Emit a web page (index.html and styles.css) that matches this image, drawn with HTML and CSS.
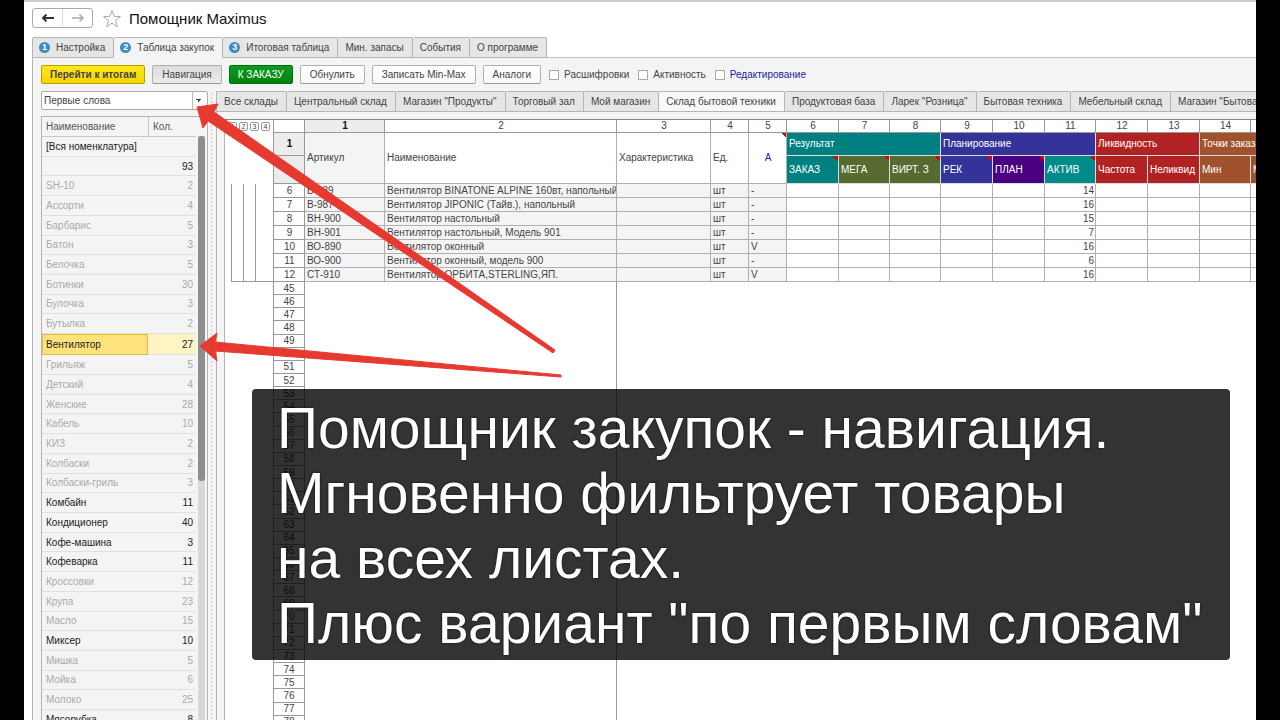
FILE: index.html
```html
<!DOCTYPE html>
<html lang="ru">
<head>
  <meta charset="UTF-8" />
  <title>Помощник Maximus</title>
  <link rel="stylesheet" href="styles.css">
</head>
<body>

  <div class="app">
    <header class="titlebar">
      <div class="history">
        <button aria-label="Назад"><svg width="12" height="8" viewBox="0 0 12 8"><path d="M4.500 .5L1 4l3.500 3.500M1 4h11" fill="none" stroke="#333" stroke-width="2"/></svg></button>
        <button aria-label="Вперед"><svg width="12" height="8" viewBox="0 0 12 8"><path d="M7.500 .5L11 4 7.500 7.500M11 4H0" fill="none" stroke="#aaa" stroke-width="1.500"/></svg></button>
      </div>
      <svg class="star" width="20" height="19" viewBox="0 0 20 19"><path d="M10 1.500l2.300 5.900 6.200.2-4.900 3.900 1.700 6.100L10 14.100l-5.300 3.500 1.700-6.100L1.500 7.600l6.200-.2z" fill="#fff" stroke="#aaa"/></svg>
      <h1>Помощник Maximus</h1>
    </header>

    <nav class="tabs">
      <button class="tab"><span class="num">1</span>Настройка</button>
      <button class="tab active"><span class="num">2</span>Таблица закупок</button>
      <button class="tab"><span class="num">3</span>Итоговая таблица</button>
      <button class="tab">Мин. запасы</button>
      <button class="tab">События</button>
      <button class="tab">О программе</button>
    </nav>

    <main class="panel">
      <div class="toolbar">
        <button class="btn yellow">Перейти к итогам</button>
        <button class="btn pressed">Навигация</button>
        <button class="btn green">К ЗАКАЗУ</button>
        <button class="btn">Обнулить</button>
        <button class="btn">Записать Min-Max</button>
        <button class="btn">Аналоги</button>
        <label class="check"><input type="checkbox">Расшифровки</label>
        <label class="check"><input type="checkbox">Активность</label>
        <label class="check blue"><input type="checkbox">Редактирование</label>
      </div>

      <div class="workspace">
        <aside class="sidebar">
          <select class="mode" aria-label="Вид навигации">
            <option>Первые слова</option>
          </select>
          <div class="nav-list">
            <table class="nav-table">
              <thead>
                <tr><th>Наименование</th><th class="qty">Кол.</th></tr>
              </thead>
              <tbody>
                <tr class="on"><td colspan="2">[Вся номенклатура]</td></tr>
                <tr class="on"><td></td><td>93</td></tr>
                <tr><td>SH-10</td><td>2</td></tr>
                <tr><td>Ассорти</td><td>4</td></tr>
                <tr><td>Барбарис</td><td>5</td></tr>
                <tr><td>Батон</td><td>3</td></tr>
                <tr><td>Белочка</td><td>5</td></tr>
                <tr><td>Ботинки</td><td>30</td></tr>
                <tr><td>Булочка</td><td>3</td></tr>
                <tr><td>Бутылка</td><td>2</td></tr>
                <tr class="on selected"><td>Вентилятор</td><td>27</td></tr>
                <tr><td>Грильяж</td><td>5</td></tr>
                <tr><td>Детский</td><td>4</td></tr>
                <tr><td>Женские</td><td>28</td></tr>
                <tr><td>Кабель</td><td>10</td></tr>
                <tr><td>КИЗ</td><td>2</td></tr>
                <tr><td>Колбаски</td><td>2</td></tr>
                <tr><td>Колбаски-гриль</td><td>3</td></tr>
                <tr class="on"><td>Комбайн</td><td>11</td></tr>
                <tr class="on"><td>Кондиционер</td><td>40</td></tr>
                <tr class="on"><td>Кофе-машина</td><td>3</td></tr>
                <tr class="on"><td>Кофеварка</td><td>11</td></tr>
                <tr><td>Кроссовки</td><td>12</td></tr>
                <tr><td>Крупа</td><td>23</td></tr>
                <tr><td>Масло</td><td>15</td></tr>
                <tr class="on"><td>Миксер</td><td>10</td></tr>
                <tr><td>Мишка</td><td>5</td></tr>
                <tr><td>Мойка</td><td>6</td></tr>
                <tr><td>Молоко</td><td>25</td></tr>
                <tr class="on"><td>Мясорубка</td><td>8</td></tr>
              </tbody>
            </table>
            <div class="scroll"><div class="thumb"></div></div>
          </div>
        </aside>

        <div class="splitter"></div>

        <section class="content">
          <nav class="sheets">
            <button class="sheet-tab">Все склады</button>
            <button class="sheet-tab">Центральный склад</button>
            <button class="sheet-tab">Магазин "Продукты"</button>
            <button class="sheet-tab">Торговый зал</button>
            <button class="sheet-tab">Мой магазин</button>
            <button class="sheet-tab active">Склад бытовой техники</button>
            <button class="sheet-tab">Продуктовая база</button>
            <button class="sheet-tab">Ларек "Розница"</button>
            <button class="sheet-tab">Бытовая техника</button>
            <button class="sheet-tab">Мебельный склад</button>
            <button class="sheet-tab">Магазин "Бытовая техника"</button>
          </nav>

          <div class="sheet">
            <div class="outline">
              <div class="levels"><button>1</button><button>2</button><button>3</button><button>4</button></div>
              <div class="brackets"><i></i><i></i><i></i></div>
            </div>
            <div class="grid-wrap">
              <table class="grid">
                <colgroup>
                  <col class="w-num"><col class="w-art"><col class="w-name"><col class="w-char"><col class="w-unit"><col class="w-unit">
                  <col class="w-a"><col class="w-b"><col class="w-b"><col class="w-a"><col class="w-a"><col class="w-b"><col class="w-a"><col class="w-a"><col class="w-b"><col class="w-b">
                </colgroup>
                <thead>
                  <tr class="numbers"><th></th><th class="current">1</th><th>2</th><th>3</th><th>4</th><th>5</th><th>6</th><th>7</th><th>8</th><th>9</th><th>10</th><th>11</th><th>12</th><th>13</th><th>14</th><th>15</th></tr>
                  <tr class="groups">
                    <th class="n current">1</th>
                    <th rowspan="2" class="shade">Артикул</th>
                    <th rowspan="2">Наименование</th>
                    <th rowspan="2">Характеристика</th>
                    <th rowspan="2">Ед.</th>
                    <th rowspan="2" class="flag mark">А</th>
                    <th colspan="3" class="teal">Результат</th>
                    <th colspan="3" class="blue">Планирование</th>
                    <th colspan="2" class="red">Ликвидность</th>
                    <th colspan="2" class="brown">Точки заказа</th>
                  </tr>
                  <tr class="heads">
                    <th class="n current"></th>
                    <th class="teal mark">ЗАКАЗ</th>
                    <th class="olive mark">МЕГА</th>
                    <th class="olive mark">ВИРТ. З</th>
                    <th class="blue mark">РЕК</th>
                    <th class="indigo mark">ПЛАН</th>
                    <th class="cyan mark">АКТИВ</th>
                    <th class="red">Частота</th>
                    <th class="red">Неликвид</th>
                    <th class="brown">Мин</th>
                    <th class="brown">Макс</th>
                  </tr>
                </thead>
                <tbody>
                  <tr><th class="n">6</th><td>В-989</td><td>Вентилятор BINATONE ALPINE 160вт, напольный</td><td></td><td>шт</td><td>-</td><td></td><td></td><td></td><td></td><td></td><td>14</td><td></td><td></td><td></td><td></td></tr>
                  <tr><th class="n">7</th><td>В-987</td><td>Вентилятор JIPONIC (Тайв.), напольный</td><td></td><td>шт</td><td>-</td><td></td><td></td><td></td><td></td><td></td><td>16</td><td></td><td></td><td></td><td></td></tr>
                  <tr><th class="n">8</th><td>ВН-900</td><td>Вентилятор настольный</td><td></td><td>шт</td><td>-</td><td></td><td></td><td></td><td></td><td></td><td>15</td><td></td><td></td><td></td><td></td></tr>
                  <tr><th class="n">9</th><td>ВН-901</td><td>Вентилятор настольный, Модель 901</td><td></td><td>шт</td><td>-</td><td></td><td></td><td></td><td></td><td></td><td>7</td><td></td><td></td><td></td><td></td></tr>
                  <tr><th class="n">10</th><td>ВО-890</td><td>Вентилятор оконный</td><td></td><td>шт</td><td>V</td><td></td><td></td><td></td><td></td><td></td><td>16</td><td></td><td></td><td></td><td></td></tr>
                  <tr><th class="n">11</th><td>ВО-900</td><td>Вентилятор оконный, модель 900</td><td></td><td>шт</td><td>-</td><td></td><td></td><td></td><td></td><td></td><td>6</td><td></td><td></td><td></td><td></td></tr>
                  <tr><th class="n">12</th><td>СТ-910</td><td>Вентилятор ОРБИТА,STERLING,ЯП.</td><td></td><td>шт</td><td>V</td><td></td><td></td><td></td><td></td><td></td><td>16</td><td></td><td></td><td></td><td></td></tr>
                </tbody>
              </table>
              <table class="tail"><tbody id="tail"></tbody></table>
            </div>
          </div>
        </section>
      </div>
    </main>
  </div>

  <svg class="arrows" width="1280" height="720" viewBox="0 0 1280 720">
    <path d="M197 107L218 104 214 112 555 350 553 353 208 121 203 128z" fill="#e63a30" stroke="#e63a30" stroke-linejoin="round"/>
    <path d="M200 346L217 333 215 342 561 375 561 377 215 351 217 361z" fill="#e63a30" stroke="#e63a30" stroke-linejoin="round"/>
  </svg>

  <div class="caption">
    Помощник закупок - навигация.<br>
    Мгновенно фильтрует товары<br>
    на всех листах.<br>
    Плюс вариант "по первым словам"
  </div>

  <script>
    // пустые строки листа
    const tail = document.getElementById('tail');
    for (let i = 45; i <= 78; i++) {
      tail.insertAdjacentHTML('beforeend', `<tr><th>${i}</th><td></td><td></td></tr>`);
    }
  </script>

</body>
</html>
```
FILE: styles.css
```css
* {
  box-sizing: border-box;
}

html, body {
  margin: 0;
  padding: 0;
  height: 100%;
  overflow: hidden;
}

body {
  background: #000;
  color: #444;
  font-family: "Liberation Sans", Arial, sans-serif;
  font-size: 10px;
  position: relative;
}

button, select, input {
  font: inherit;
  color: inherit;
  margin: 0;
}

table {
  border-collapse: separate;
  border-spacing: 0;
  table-layout: fixed;
}

th {
  font-weight: normal;
}

.app {
  height: 100vh;
  margin: 0 24px;
  background: #fff;
  border-top: 2px solid #ccc;
  overflow: hidden;
  display: flex;
  flex-direction: column;
}

/* заголовок */
.titlebar {
  display: flex;
  align-items: center;
  height: 35px;
  padding: 0 0 3px 8px;
}

.history {
  display: flex;
  width: 61px;
  height: 20px;
  border: 1px solid #aaa;
  border-radius: 3px;
}

.history button {
  flex: 1;
  display: flex;
  align-items: center;
  justify-content: center;
  padding: 0;
  border: none;
  background: none;
}

.history button + button {
  border-left: 1px solid #ddd;
}

.star {
  margin-left: 9px;
}

h1 {
  margin: 0 0 0 7px;
  font-size: 15px;
  font-weight: normal;
  color: #111;
}

/* вкладки */
.tabs {
  display: flex;
  height: 21px;
  padding-left: 8px;
  flex: none;
  position: relative;
  z-index: 1;
  margin-bottom: -1px;
}

.tab {
  display: flex;
  align-items: center;
  padding: 0 8px 0 7px;
  background: #e6e6e6;
  border: 1px solid #b5b5b5;
  border-left-width: 0;
  border-radius: 2px 2px 0 0;
  white-space: nowrap;
}

.tab:first-child {
  border-left-width: 1px;
}

.tab.active {
  background: #f4f4f4;
  border-bottom-color: #f4f4f4;
}

.num {
  width: 11px;
  height: 11px;
  margin-right: 6px;
  margin-left: -1px;
  border-radius: 50%;
  background: #3d8cc4;
  color: #fff;
  font-size: 9px;
  font-weight: bold;
  line-height: 11px;
  text-align: center;
}

.panel {
  flex: 1;
  min-height: 0;
  margin-left: 8px;
  padding-left: 8px;
  background: #f4f4f4;
  border-top: 1px solid #c4c4c4;
  border-left: 1px solid #b5b5b5;
  display: flex;
  flex-direction: column;
}

/* панель команд */
.toolbar {
  display: flex;
  align-items: center;
  height: 33px;
  gap: 7px;
  flex: none;
}

.btn {
  height: 19px;
  padding: 0 9px;
  background: linear-gradient(#fff, #f8f8f8);
  border: 1px solid #b0b0b0;
  border-bottom-color: #999;
  border-radius: 2px;
  line-height: 17px;
  white-space: nowrap;
}

.btn.yellow {
  padding: 0 8px;
  background: linear-gradient(#ffe81a, #f5d400);
  border-color: #b89e00;
  font-weight: bold;
}

.btn.pressed {
  background: linear-gradient(#dcdcdc, #ececec);
}

.btn.green {
  padding: 0 8px;
  background: linear-gradient(#0c9a1e, #00840f);
  border-color: #00700c;
  color: #fff;
}

.check {
  display: flex;
  align-items: center;
  gap: 5px;
  margin: 0 1px;
}

.check input {
  appearance: none;
  width: 10px;
  height: 10px;
  background: #fff;
  border: 1px solid #aaa;
}

.check.blue {
  color: #2222aa;
}

.workspace {
  display: flex;
  flex: 1;
  min-height: 0;
}

/* навигация */
.sidebar {
  width: 167px;
  flex: none;
  display: flex;
  flex-direction: column;
  gap: 6px;
}

.mode {
  appearance: none;
  height: 19px;
  padding: 0 2px;
  border: 1px solid #aaa;
  border-radius: 2px;
  background:
    linear-gradient(to top right, transparent 50%, #444 50%) right 8px center / 3px 3px no-repeat,
    linear-gradient(to top left, transparent 50%, #444 50%) right 5px center / 3px 3px no-repeat,
    linear-gradient(#bbb, #bbb) right 14px top / 1px 100% no-repeat,
    #fff;
}

.nav-list {
  flex: 1;
  min-height: 0;
  overflow: hidden;
  display: flex;
  justify-content: space-between;
  border: 1px solid #b5b5b5;
  border-bottom: none;
}

.nav-table {
  width: 154px;
  height: 613px;
}

.nav-table th, .nav-table td {
  padding: 0 3px 0 4px;
  text-align: left;
  border-bottom: 1px solid #e0e0e0;
  color: #aaa;
  white-space: nowrap;
}

.nav-table th {
  height: 20px;
  border-color: #c8c8c8;
  color: #555;
}

.nav-table .qty {
  width: 48px;
  border-left: 1px solid #c8c8c8;
}

.nav-table td + td {
  text-align: right;
}

.nav-table .on td {
  color: #222;
}

.nav-table .selected td {
  background: #fff4c4;
}

.nav-table .selected td:first-child {
  background: #ffe27a;
  border: 1px solid #e0bc3c;
  padding-left: 3px;
}

.scroll {
  width: 7px;
  margin: 19px 2px 0 0;
  background: #d8d8d8;
}

.thumb {
  height: 59%;
  border-radius: 3px;
  background: #8e8e8e;
}

.splitter {
  width: 8px;
  flex: none;
  background: linear-gradient(#f4f4f4 50%, transparent 50%) 0 0 / 100% 4px, linear-gradient(90deg, transparent 3px, #ccc 3px, #ccc 4px, transparent 4px);
}

/* листы */
.content {
  flex: 1;
  min-width: 0;
  display: flex;
  flex-direction: column;
  border-left: 1px solid #b5b5b5;
}

.sheets {
  display: flex;
  height: 21px;
  flex: none;
  overflow: hidden;
  border-bottom: 1px solid #b5b5b5;
}

.sheet-tab {
  flex: none;
  padding: 0 8px 0 7px;
  background: #e6e6e6;
  border: 1px solid #b5b5b5;
  border-width: 1px 1px 0 0;
  border-radius: 2px 2px 0 0;
  white-space: nowrap;
}

.sheet-tab.active {
  background: #f8f8f8;
}

.sheet {
  flex: 1;
  min-height: 0;
  margin: 7px 0 0 7px;
  overflow: hidden;
  display: flex;
  background: #fff;
  border-top: 1px solid #888;
  border-left: 1px solid #b5b5b5;
}

.outline {
  width: 48px;
  flex: none;
}

.levels {
  display: flex;
  gap: 2px;
  padding: 2px 0 0 3px;
}

.levels button {
  width: 9px;
  height: 9px;
  padding: 0;
  border: 1px solid #999;
  border-radius: 2px;
  background: #fff;
  font-size: 7px;
  line-height: 7px;
  text-align: center;
}

.brackets {
  display: flex;
  height: 98px;
  margin: 53px 0 0 6px;
  border-bottom: 1px solid #999;
}

.brackets i {
  width: 12px;
  border-left: 1px solid #999;
}

.grid, .tail {
  border-left: 1px solid #999;
}

.grid {
  width: 1013px;
}

.w-num { width: 31px; }
.w-art { width: 80px; }
.w-name { width: 232px; }
.w-char { width: 94px; }
.w-unit { width: 38px; }
.w-a { width: 52px; }
.w-b { width: 51px; }

.grid th, .grid td {
  height: 14px;
  padding: 0 1px 0 2px;
  line-height: 12px;
  text-align: left;
  white-space: nowrap;
  overflow: hidden;
  border-right: 1px solid #b0b0b0;
  border-bottom: 1px solid #b0b0b0;
}

.grid .numbers th {
  height: 13px;
  text-align: center;
  border-color: #999;
}

.grid .groups th { height: 23px; }
.grid .heads th { height: 28px; }

.grid .n {
  text-align: center;
  border-color: #999;
}

.grid .current {
  background: #ececec;
  font-weight: bold;
  color: #111;
}

.grid .shade,
.grid td:nth-child(-n+6) {
  background: #f4f4f4;
}

.grid td:nth-child(12) {
  text-align: right;
}

.grid .flag {
  text-align: center;
  color: #2222aa;
}

.grid .teal, .grid .blue, .grid .red, .grid .brown,
.grid .olive, .grid .indigo, .grid .cyan {
  color: #fff;
  border-color: #ddd;
}

.grid .teal { background-color: #008080; }
.grid .blue { background-color: #333399; }
.grid .red { background-color: #b22222; }
.grid .brown { background-color: #a0522d; }
.grid .olive { background-color: #556b2f; }
.grid .indigo { background-color: #4b0082; }
.grid .cyan { background-color: #008b8b; }

/* уголок примечания */
.grid .mark {
  background-image: linear-gradient(45deg, transparent 50%, #e00000 50%);
  background-position: right top;
  background-size: 5px 5px;
  background-repeat: no-repeat;
}

.tail {
  width: 344px;
  height: 447px;
}

.tail th {
  width: 31px;
  padding: 0;
  line-height: 11px;
  border-right: 1px solid #999;
  border-bottom: 1px solid #999;
}

.tail td {
  padding: 0;
}

.tail td:last-child {
  border-right: 1px solid #999;
}

/* поверх окна */
.arrows {
  position: absolute;
  top: 0;
  left: 0;
}

.caption {
  position: absolute;
  top: 389px;
  left: 252px;
  padding: 7px 28px 4px 25px;
  border-radius: 4px;
  background: rgba(0, 0, 0, 0.8);
  color: #fff;
  font-size: 57px;
  line-height: 65px;
  white-space: nowrap;
  text-shadow: 0 0 2px #000;
}
```
